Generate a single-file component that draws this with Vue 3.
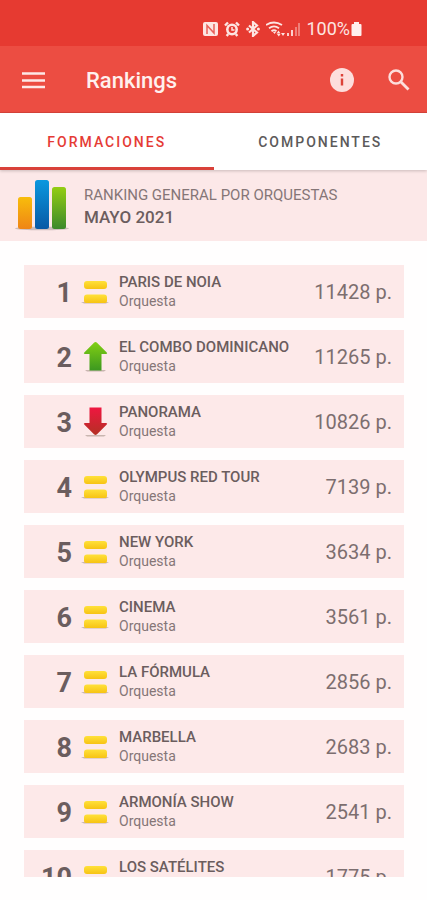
<template>
  <div class="screen">
    <div class="status-bar">
      <svg width="16" height="16" viewBox="0 0 16 16" aria-label="NFC">
        <rect x="0" y="1" width="15" height="14" rx="2" fill="#fde5e2" />
        <path d="M4 13V4.500L11 12V3" fill="none" stroke="#e8605a" stroke-width="1.5" />
      </svg>
      <svg width="16" height="16" viewBox="0 0 16 16" aria-label="Alarma">
        <circle cx="8" cy="8.500" r="6" fill="#fde5e2" />
        <path d="M1 4.500 4 1.500M15 4.500l-3-3M4.200 13l-1.500 2M11.800 13l1.500 2" stroke="#fde5e2" stroke-width="2.400" />
        <circle cx="8" cy="8.500" r="3.400" fill="#e63a31" />
        <path d="M8 6v3h2.500" fill="none" stroke="#fde5e2" stroke-width="1.500" />
      </svg>
      <svg width="16" height="16" viewBox="0 0 16 16" aria-label="Bluetooth">
        <path d="M4 4.500l8 7L8 15V1l4 3.500-8 7" fill="none" stroke="#fde5e2" stroke-width="2.200" />
        <circle cx="2.600" cy="8" r="1.500" fill="#fde5e2" />
        <circle cx="13.400" cy="8" r="1.500" fill="#fde5e2" />
      </svg>
      <svg class="wifi" width="20" height="16" viewBox="0 0 20 16" aria-label="Wifi">
        <g fill="none" stroke="#fde5e2" stroke-width="1.800">
          <path d="M0 4q8-5 16 0" />
          <path d="M3 7.200q5-3.500 10 0" />
          <path d="M5.500 10.300q2.500-2 5 0" />
        </g>
        <path d="M7 11h3l-1.500 2zM10.500 12.500l2-3 2 3zM11 13h3.500l-1.700 2.500zM15 12h4l-2 3z" fill="#fde5e2" />
      </svg>
      <svg width="14" height="16" viewBox="0 0 14 16" aria-label="Cobertura">
        <path d="M0 12h2v3H0zM4 9h2v6H4z" fill="#fbd0cc" />
        <path d="M8 6h2v9H8zM11 2h2v13h-2z" fill="#f07f78" />
      </svg>
      <span class="battery-text">100%</span>
      <svg width="11" height="16" viewBox="0 0 11 16" aria-label="Batería">
        <path d="M3 1h5v2h1.500q1 0 1 1v10q0 1-1 1h-8q-1 0-1-1V4q0-1 1-1H3z" fill="#fff0ee" />
      </svg>
    </div>

    <header class="app-bar">
      <button class="icon-btn" aria-label="Menú">
        <svg width="24" height="24" viewBox="0 0 24 24">
          <path d="M0 5.500h23M0 12.500h23M0 19h23" stroke="#fde9e7" stroke-width="2.600" />
        </svg>
      </button>
      <h1 class="title">Rankings</h1>
      <button class="icon-btn" aria-label="Información">
        <svg width="24" height="24" viewBox="0 0 24 24">
          <circle cx="12" cy="12" r="12" fill="#fddedc" />
          <path d="M10.800 10.500h2.400v7h-2.400zM10.800 6h2.400v2.400h-2.400z" fill="#dc4238" />
        </svg>
      </button>
      <button class="icon-btn search" aria-label="Buscar">
        <svg width="22" height="22" viewBox="0 0 22 22">
          <circle cx="8" cy="8" r="6.500" fill="none" stroke="#fddedc" stroke-width="2.400" />
          <path d="M13 13l7.500 7.500" stroke="#fddedc" stroke-width="2.800" />
        </svg>
      </button>
    </header>

    <nav class="tabs">
      <button
        v-for="tab in tabs"
        :key="tab"
        class="tab"
        :class="{ active: tab === activeTab }"
        @click="activeTab = tab"
      >
        {{ tab }}
      </button>
    </nav>

    <section class="summary">
      <svg class="chart" width="56" height="54" viewBox="0 0 56 54" aria-hidden="true">
        <defs>
          <linearGradient id="bar-orange" x2="0" y2="1">
            <stop offset="0" stop-color="#f8bd0b" />
            <stop offset="1" stop-color="#ef8516" />
          </linearGradient>
          <linearGradient id="bar-blue" x2="0" y2="1">
            <stop offset="0" stop-color="#0b98df" />
            <stop offset="1" stop-color="#0759a5" />
          </linearGradient>
          <linearGradient id="bar-green" x2="0" y2="1">
            <stop offset="0" stop-color="#94cd13" />
            <stop offset="1" stop-color="#3b892b" />
          </linearGradient>
        </defs>
        <ellipse cx="28" cy="49.500" rx="27" ry="1.800" fill="#cdbdbd" />
        <rect x="4" y="18" width="14" height="32" rx="2.500" fill="url(#bar-orange)" />
        <rect x="21" y="1" width="14" height="49" rx="2.500" fill="url(#bar-blue)" />
        <rect x="38" y="8" width="14" height="42" rx="2.500" fill="url(#bar-green)" />
      </svg>
      <div>
        <p class="summary-title">RANKING GENERAL POR ORQUESTAS</p>
        <p class="summary-date">MAYO 2021</p>
      </div>
    </section>

    <ol class="ranking">
      <li v-for="(item, i) in items" :key="item.name" class="row">
        <span class="position">{{ i + 1 }}</span>
        <svg class="trend" width="28" height="32" viewBox="0 0 28 32" aria-hidden="true">
          <defs>
            <linearGradient :id="`trend-${i}`" x2="0" y2="1">
              <stop offset="0" :stop-color="colors[item.trend][0]" />
              <stop offset="1" :stop-color="colors[item.trend][1]" />
            </linearGradient>
          </defs>
          <template v-if="item.trend === 'same'">
            <path d="M0 26h28l-3 1.500H3z" fill="#c9b6b0" />
            <rect x="3" y="5" width="23" height="8" rx="3" :fill="`url(#trend-${i})`" />
            <path d="M6 18.500h17q3 0 3 3v3.500q0 2-2 2H5q-2 0-2-2v-3.500q0-3 3-3z" :fill="`url(#trend-${i})`" />
          </template>
          <template v-else>
            <path d="M4 29h21l-2 1.500H6z" fill="#c9b6b0" />
            <path
              v-if="item.trend === 'up'"
              d="M14.500 1q.8 0 1.500.8l9.500 9.500q1.500 1.700-.5 1.700h-4.500v16.500h-12V13H4q-2 0-.5-1.700l9.500-9.500Q13.700 1 14.500 1z"
              :fill="`url(#trend-${i})`"
            />
            <path
              v-else
              d="M8.500 1.500h12V17H25q2 0 .5 1.700l-9.500 9.500q-1.500 1.500-3 0l-9.500-9.500Q2 17 4 17h4.500z"
              :fill="`url(#trend-${i})`"
            />
          </template>
        </svg>
        <div class="info">
          <span class="name">{{ item.name }}</span>
          <span class="kind">Orquesta</span>
        </div>
        <span class="points">{{ item.points }} p.</span>
      </li>
    </ol>
  </div>
</template>

<script setup>
import { ref } from 'vue'

const tabs = ['FORMACIONES', 'COMPONENTES']
const activeTab = ref('FORMACIONES')

const colors = {
  same: ['#ffe13a', '#f7c313'],
  up: ['#82cf13', '#3c9820'],
  down: ['#ef1640', '#b43024'],
}

const items = [
  { name: 'PARIS DE NOIA', points: 11428, trend: 'same' },
  { name: 'EL COMBO DOMINICANO', points: 11265, trend: 'up' },
  { name: 'PANORAMA', points: 10826, trend: 'down' },
  { name: 'OLYMPUS RED TOUR', points: 7139, trend: 'same' },
  { name: 'NEW YORK', points: 3634, trend: 'same' },
  { name: 'CINEMA', points: 3561, trend: 'same' },
  { name: 'LA FÓRMULA', points: 2856, trend: 'same' },
  { name: 'MARBELLA', points: 2683, trend: 'same' },
  { name: 'ARMONÍA SHOW', points: 2541, trend: 'same' },
  { name: 'LOS SATÉLITES', points: 1775, trend: 'same' },
]
</script>

<style>
body {
  margin: 0;
  background: #fffefe;
}
</style>

<style scoped>
.screen {
  display: flex;
  flex-direction: column;
  height: 100vh;
  box-sizing: border-box;
  padding-bottom: 23px;
  font-family: Roboto, 'Liberation Sans', sans-serif;
  color: #6b5d5e;
}
svg {
  display: block;
  flex-shrink: 0;
}
button {
  border: 0;
  padding: 0;
  background: none;
  font-family: inherit;
  cursor: pointer;
}
.status-bar {
  display: flex;
  flex-shrink: 0;
  align-items: center;
  justify-content: flex-end;
  gap: 5px;
  height: 46px;
  padding: 12px 65px 0 0;
  box-sizing: border-box;
  background: #e63a31;
  color: #fde5e2;
}
.wifi {
  margin-right: -4px;
}
.battery-text {
  margin-right: -4px;
  font-size: 18px;
  line-height: 20px;
}
.app-bar {
  display: flex;
  flex-shrink: 0;
  align-items: center;
  height: 67px;
  padding: 2px 17px 0 22px;
  box-sizing: border-box;
  background: #ec4d42;
  border-bottom: 1px solid #d9443a;
}
.title {
  flex: 1;
  margin: 0 0 0 40px;
  font-size: 22px;
  font-weight: 500;
  line-height: 26px;
  padding-top: 2px;
  color: #fff0ee;
}
.search {
  margin-left: 34px;
}
.tabs {
  display: flex;
  flex-shrink: 0;
  height: 57px;
  background: #fff;
  box-shadow: 0 1px 3px rgba(0, 0, 0, 0.2);
  position: relative;
}
.tab {
  flex: 1;
  border-top: 3px solid transparent;
  border-bottom: 3px solid transparent;
  font-size: 14px;
  font-weight: 500;
  letter-spacing: 2px;
  color: #5c5a5a;
}
.tab.active {
  color: #e53b35;
  border-bottom-color: #d9413a;
}
.summary {
  display: flex;
  flex-shrink: 0;
  align-items: center;
  height: 71px;
  padding-left: 14px;
  background: #fce8e8;
}
.chart {
  margin-right: 14px;
}
.summary p {
  margin: 0;
  font-size: 16px;
  line-height: 22px;
}
.summary .summary-title {
  font-size: 15px;
  color: #857677;
}
.summary .summary-date {
  font-size: 17px;
  font-weight: 500;
}
.ranking {
  flex: 1;
  min-height: 0;
  overflow: hidden;
  display: flex;
  flex-direction: column;
  gap: 12px;
  margin: 0;
  padding: 24px 23px 0 24px;
  list-style: none;
}
.row {
  display: flex;
  flex-shrink: 0;
  align-items: center;
  height: 53px;
  padding: 0 12px 0 10px;
  background: #fde9e9;
}
.position {
  width: 38px;
  font-size: 27px;
  font-weight: 700;
  line-height: 32px;
  padding-top: 2px;
  text-align: right;
}
.trend {
  margin: 0 10px 0 9px;
}
.info {
  display: flex;
  flex: 1;
  flex-direction: column;
}
.name {
  font-size: 15px;
  font-weight: 500;
  line-height: 18px;
}
.kind {
  font-size: 14px;
  line-height: 20px;
  color: #857677;
}
.points {
  font-size: 20px;
  line-height: 24px;
  color: #7c6e6f;
}
</style>
